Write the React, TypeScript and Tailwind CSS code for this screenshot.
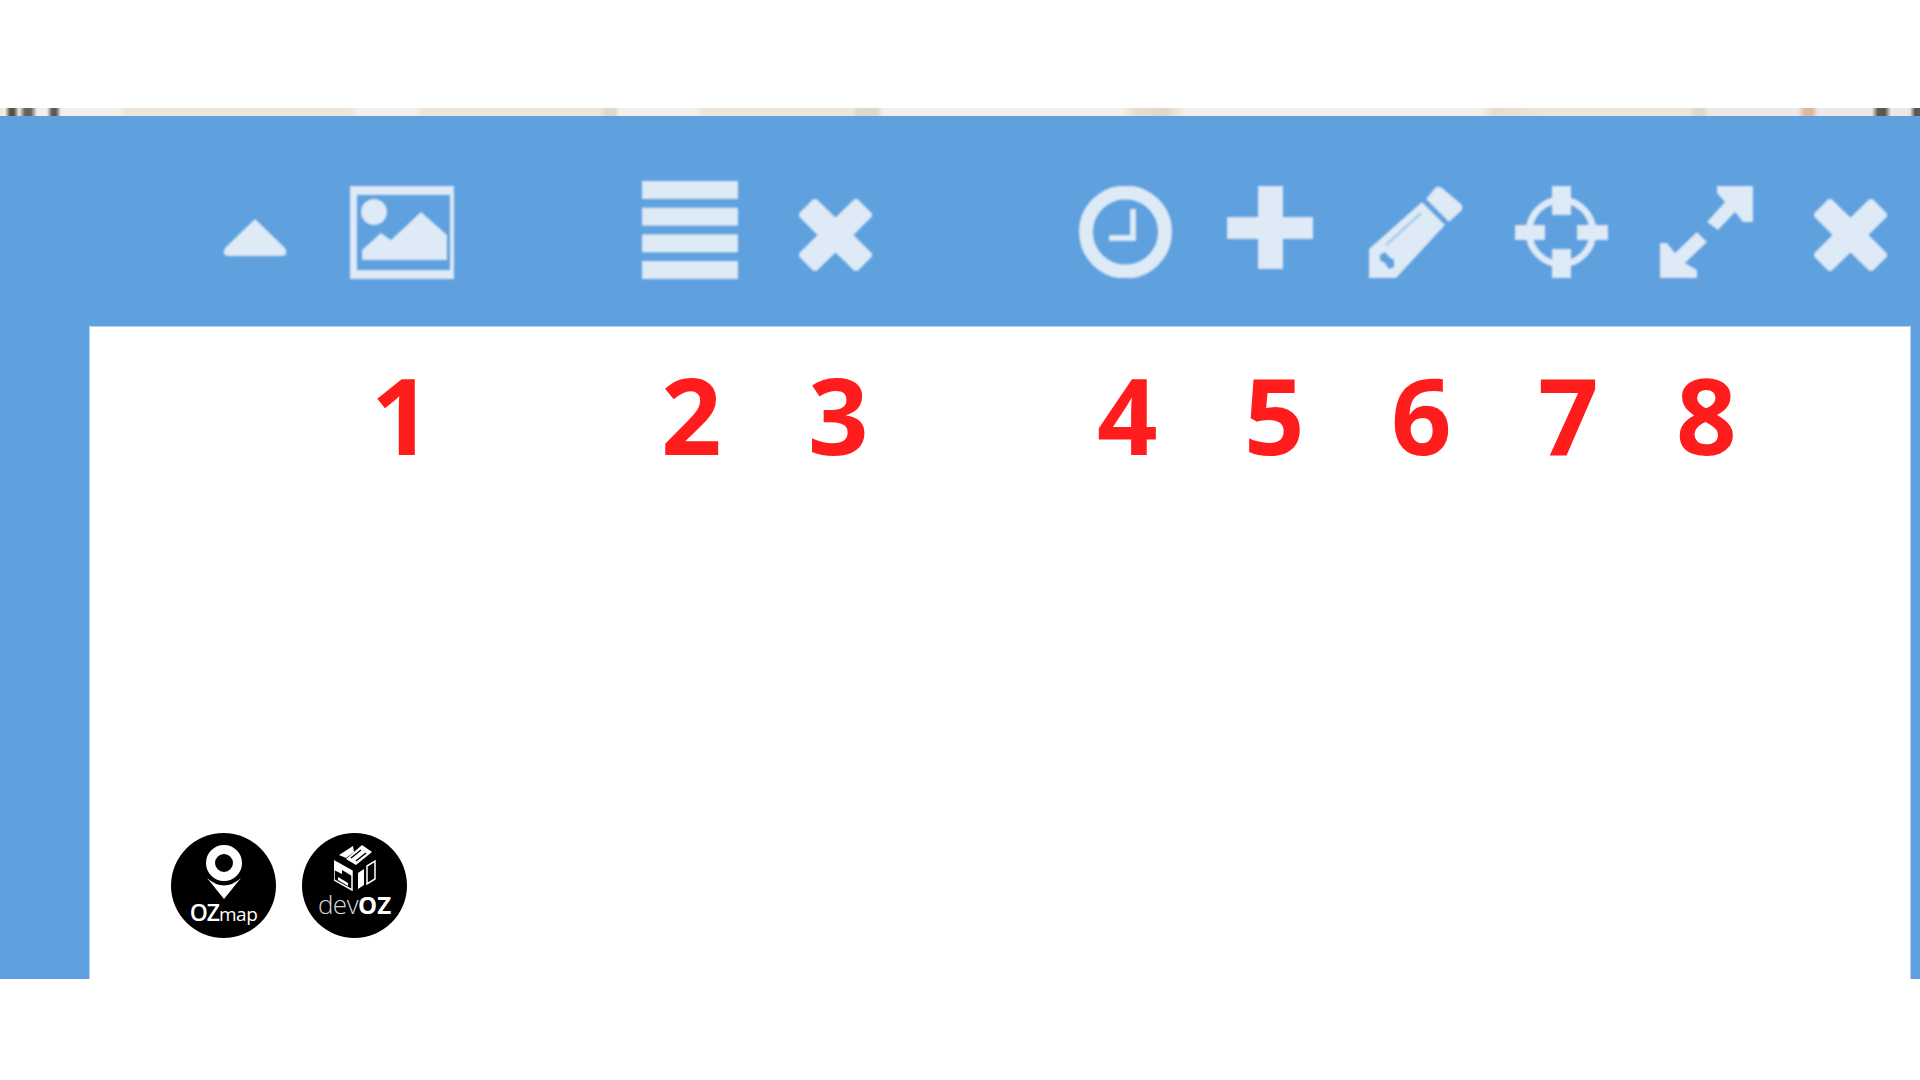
const iconClass = "block shrink-0 blur-[1px] fill-[#deeaf6]";

function CaretIcon() {
  return (
    <svg className={`${iconClass} mt-[38px]`} width="64" height="37" viewBox="0 0 64 37">
      <path d="M32 0 L62 29 Q66 37 58 37 L6 37 Q-2 37 2 29 Z" />
    </svg>
  );
}

function PictureIcon() {
  return (
    <svg className={`${iconClass} ml-[63px] mt-[5px]`} width="104" height="93" viewBox="0 0 104 93">
      <path fillRule="evenodd" d="M0 0H104V93H0Z M7 9V84H100V9Z" />
      <circle cx="24" cy="26" r="13" />
      <path d="M12 74V64L31 47L41 54L71 26L97 49V74Z" />
    </svg>
  );
}

function MenuIcon() {
  return (
    <svg className={`${iconClass} ml-[188px]`} width="96" height="98" viewBox="0 0 96 98">
      <rect x="0" y="0" width="96" height="18" />
      <rect x="0" y="26.7" width="96" height="18" />
      <rect x="0" y="53.3" width="96" height="18" />
      <rect x="0" y="80" width="96" height="18" />
    </svg>
  );
}

function CloseIcon({ className }: { className: string }) {
  return (
    <svg className={`block shrink-0 blur-[1px] ${className}`} width="75" height="74" viewBox="0 0 75 74">
      <path
        d="M5 17L17 5L37.5 25L58 5L70 17L50 37L70 57L58 69L37.5 49L17 69L5 57L25 37Z"
        fill="#deeaf6"
        stroke="#deeaf6"
        strokeWidth="8"
        strokeLinejoin="round"
      />
    </svg>
  );
}

function ClockIcon() {
  return (
    <svg className="block shrink-0 blur-[1px] ml-[206px] mt-[5px]" width="93" height="92" viewBox="0 0 93 92">
      <circle cx="46.5" cy="46" r="39.5" fill="none" stroke="#deeaf6" strokeWidth="14" />
      <path d="M54 23V52H30" fill="none" stroke="#deeaf6" strokeWidth="6" />
    </svg>
  );
}

function PlusIcon() {
  return (
    <svg className={`${iconClass} ml-[55px] mt-[5px]`} width="86" height="83" viewBox="0 0 86 83">
      <path d="M31 0H56V31H86V53H56V83H31V53H0V31H31Z" />
    </svg>
  );
}

function PencilIcon() {
  return (
    <svg className={`${iconClass} ml-[56px] mt-[5px]`} width="95" height="92" viewBox="0 0 95 92">
      <path d="M0 92V63L53 16L76 39L27 92Z" />
      <path d="M57 13L66 2Q69 -1 73 2L92 18Q95 21 92 25L80 36Z" />
      <path d="M17 59L52 27" fill="none" stroke="#a9cbec" strokeWidth="2.5" />
      <path d="M11 69L16 66L20 71L25 74L25 81L20 83L16 77L11 74Z" className="fill-[#5fa0de]" />
    </svg>
  );
}

function CrosshairIcon() {
  return (
    <svg className={`${iconClass} ml-[51px] mt-[5px]`} width="93" height="92" viewBox="0 0 93 92">
      <circle cx="46" cy="46" r="32" fill="none" stroke="#deeaf6" strokeWidth="7" />
      <rect x="37" y="0" width="19" height="29" />
      <rect x="37" y="63" width="19" height="29" />
      <rect x="0" y="39" width="30" height="15" />
      <rect x="62" y="39" width="31" height="15" />
    </svg>
  );
}

function ResizeIcon() {
  return (
    <svg className={`${iconClass} ml-[52px] mt-[5px]`} width="93" height="92" viewBox="0 0 93 92">
      <path d="M57 0H93V36H83L75 26L58 44L47 36L65 16L57 7Z" />
      <path d="M0 57V92H37V84L25 77L47 56L37 46L15 67L7 57Z" />
    </svg>
  );
}

function OzMapLogo() {
  return (
    <div className="flex size-[105px] shrink-0 flex-col items-center rounded-full bg-black pt-[12px]">
      <svg className="block shrink-0" width="38" height="54" viewBox="0 0 38 54">
        <circle cx="19" cy="18" r="13.5" fill="none" stroke="#fff" strokeWidth="9" />
        <path d="M2 33Q19 48 36 33L19 54Z" fill="#fff" />
      </svg>
      <div className="flex items-baseline font-['Open_Sans',sans-serif] text-white leading-[26px]">
        <span className="text-[23px] font-semibold tracking-[-1px]">OZ</span>
        <span className="text-[19px] font-normal tracking-[-0.5px]">map</span>
      </div>
    </div>
  );
}

function DevOzLogo() {
  return (
    <div className="flex size-[105px] shrink-0 flex-col items-center rounded-full bg-black pt-[10px]">
      <svg className="block shrink-0" width="42" height="48" viewBox="0 0 42 48">
        <path d="M5 12L19 3L20 9L12 15Z" fill="#fff" />
        <path d="M12 16L28 2L38 9L22 22Z" fill="#fff" />
        <path d="M17 15L27 7M22 18L32 10" stroke="#000" strokeWidth="1.5" />
        <path d="M0 18L18 28V47L0 37Z" fill="none" stroke="#fff" strokeWidth="1.5" />
        <path d="M0 18L18 28V33L8 27V31L0 27Z" fill="#fff" />
        <path d="M4 34L14 40V43L4 37Z" fill="#fff" />
        <path d="M24 30L30 26V42L24 46Z" fill="#fff" />
        <path d="M33 23L41 18V36L33 41Z" fill="none" stroke="#fff" strokeWidth="1.5" />
      </svg>
      <div className="flex items-baseline font-['Open_Sans',sans-serif] text-white leading-[26px]">
        <span className="text-[26px] font-light tracking-[-0.5px] text-[#d8d8d8]">dev</span>
        <span className="text-[24px] font-bold">OZ</span>
      </div>
    </div>
  );
}

function Digit({ value, className }: { value: string; className: string }) {
  return <span className={`block w-[60px] shrink-0 text-center ${className}`}>{value}</span>;
}

export default function App() {
  return (
    <div className="flex h-[1080px] w-[1920px] flex-col overflow-hidden bg-white pt-[108px]">
      {/* what is left of the map above the panel */}
      <div className="h-[8px] shrink-0 blur-[0.5px] bg-[linear-gradient(90deg,#f7e9c0_0,#f3efeb_5px,#55524e_10px,#55524e_14px,#f3efeb_19px,#66625c_25px,#66625c_31px,#f3efeb_37px,#f3efeb_47px,#5c5853_52px,#5c5853_56px,#f3efeb_61px,#f3efeb_119px,#ebe5dc_125px,#ebe5dc_350px,#f3efeb_358px,#f3efeb_414px,#ebe5dc_424px,#ebe5dc_600px,#dcd8d0_606px,#dcd8d0_614px,#f3efeb_620px,#f3efeb_695px,#ebe5dc_705px,#ebe5dc_852px,#dcd8d0_858px,#dcd8d0_876px,#f3efeb_884px,#f3efeb_1122px,#e6ded0_1135px,#dfd6c6_1165px,#f3efeb_1186px,#f3efeb_1480px,#e5ddd0_1495px,#ebe5dc_1542px,#ebe5dc_1689px,#dcd8d0_1695px,#dcd8d0_1703px,#ece9e5_1709px,#ece9e5_1798px,#d9b99b_1805px,#d9b99b_1812px,#ece9e5_1818px,#ece9e5_1872px,#5a5650_1878px,#5a5650_1885px,#ece9e5_1891px,#ece9e5_1910px,#5a5650_1915px,#5a5650_1920px)]" />

      <div className="flex h-[863px] shrink-0 flex-col bg-[#5fa0de]">
        {/* toolbar */}
        <div className="flex h-[210px] shrink-0 items-start pl-[223px] pt-[65px]">
          <CaretIcon />
          <PictureIcon />
          <MenuIcon />
          <CloseIcon className="ml-[60px] mt-[17px]" />
          <ClockIcon />
          <PlusIcon />
          <PencilIcon />
          <CrosshairIcon />
          <ResizeIcon />
          <CloseIcon className="ml-[60px] mt-[17px]" />
        </div>

        {/* content panel */}
        <div className="ml-[89px] mr-[9px] flex min-h-0 flex-1 flex-col border-x border-t border-[#b4d2ef] bg-white">
          <div className="flex pl-[281px] pt-[15px] font-['Open_Sans',sans-serif] text-[106px] font-bold leading-[144px] text-[#ff1c1c]">
            <Digit value="1" className="" />
            <Digit value="2" className="ml-[230px]" />
            <Digit value="3" className="ml-[87px]" />
            <Digit value="4" className="ml-[229px]" />
            <Digit value="5" className="ml-[87px]" />
            <Digit value="6" className="ml-[87px]" />
            <Digit value="7" className="ml-[87px]" />
            <Digit value="8" className="ml-[78px]" />
          </div>
          <div className="mb-[41px] ml-[81px] mt-auto flex gap-[26px]">
            <OzMapLogo />
            <DevOzLogo />
          </div>
        </div>
      </div>
    </div>
  );
}
